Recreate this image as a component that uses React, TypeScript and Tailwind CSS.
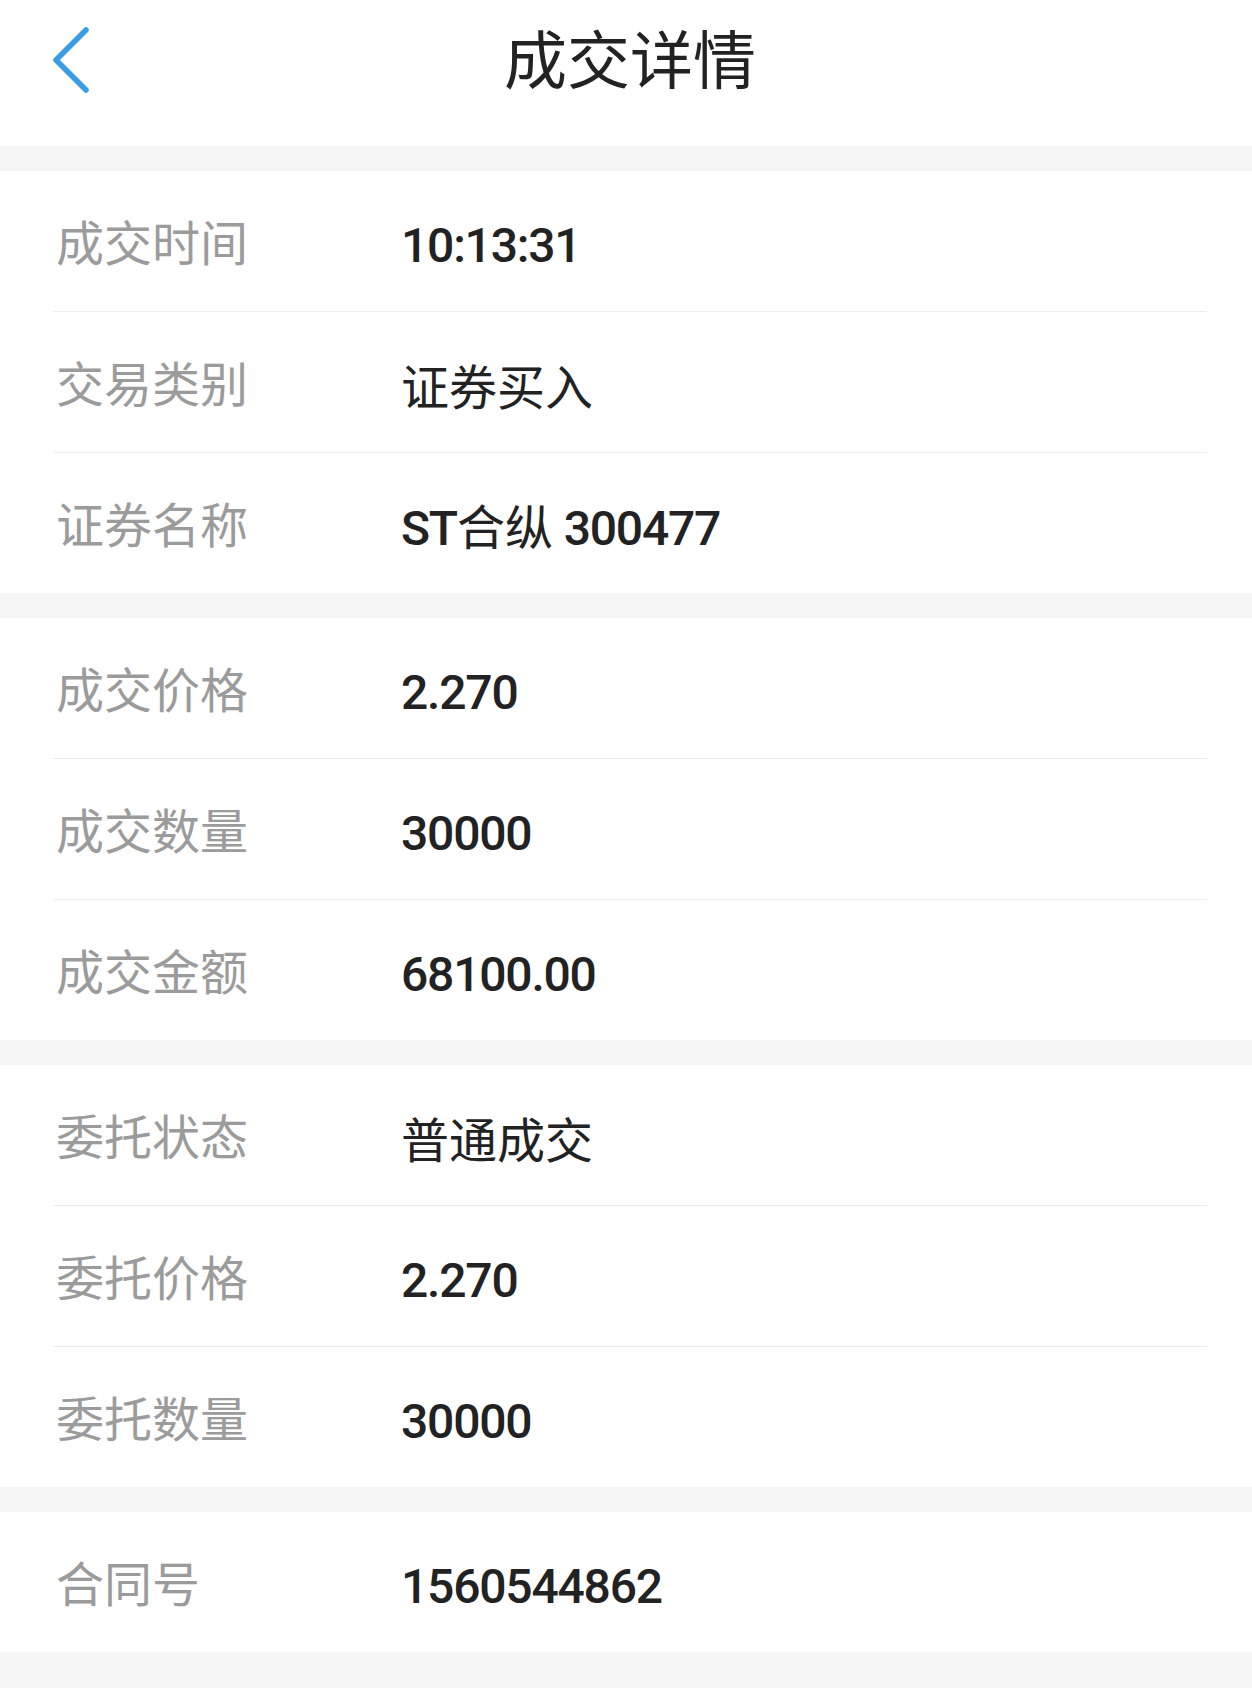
import React from "react";

type Row = { label: string; value: string };

const sections: Row[][] = [
  [
    { label: "成交时间", value: "10:13:31" },
    { label: "交易类别", value: "证券买入" },
    { label: "证券名称", value: "ST合纵 300477" },
  ],
  [
    { label: "成交价格", value: "2.270" },
    { label: "成交数量", value: "30000" },
    { label: "成交金额", value: "68100.00" },
  ],
  [
    { label: "委托状态", value: "普通成交" },
    { label: "委托价格", value: "2.270" },
    { label: "委托数量", value: "30000" },
  ],
  [{ label: "合同号", value: "1560544862" }],
];

function Value({ text }: { text: string }) {
  const runs = text.match(/[\u4e00-\u9fff]+|[^\u4e00-\u9fff]+/g) || [];
  return (
    <>
      {runs.map((r, i) =>
        /[\u4e00-\u9fff]/.test(r) ? (
          <span key={i} className="font-normal [font-family:'Noto_Sans_CJK_SC',sans-serif]">
            {r}
          </span>
        ) : (
          <span key={i} className="font-medium tracking-[-1.2px] [font-family:Roboto,sans-serif]">
            {r}
          </span>
        )
      )}
    </>
  );
}

function DetailRow({ row, last }: { row: Row; last: boolean }) {
  return (
    <div
      className={
        "ml-[53px] mr-[45px] flex items-center border-b " +
        (last ? "h-[140px] border-transparent border-b-0" : "h-[141px] border-[#ececec]")
      }
    >
      <div className="w-[348px] pl-[3px] pb-[2px] text-[48px] leading-none text-[#9b9b9b] [font-family:'Noto_Sans_CJK_SC',sans-serif]">
        {row.label}
      </div>
      <div className="pt-[7px] text-[48px] leading-none text-[#222222] whitespace-pre">
        <Value text={row.value} />
      </div>
    </div>
  );
}

export default function App() {
  return (
    <div className="w-[1252px] min-h-[1688px] bg-[#f5f5f5] pb-[36px]">
      <header className="h-[146px] bg-white pb-[26px] grid grid-cols-[1fr_auto_1fr] items-center">
        <div className="pl-[52px] flex items-center">
          <svg width="40" height="66" viewBox="0 0 40 66" fill="none">
            <path
              d="M34 3 L4 33 L34 63"
              stroke="#3a9ce3"
              strokeWidth="5.5"
              strokeLinecap="round"
              strokeLinejoin="round"
            />
          </svg>
        </div>
        <h1 className="pb-[10px] pl-[8px] text-[63px] leading-none text-[#222222] [font-family:'Noto_Sans_CJK_SC',sans-serif]">
          成交详情
        </h1>
        <div />
      </header>
      {sections.map((rows, i) => (
        <section key={i} className="bg-white mt-[25px]">
          {rows.map((r, j) => (
            <DetailRow key={j} row={r} last={j === rows.length - 1} />
          ))}
        </section>
      ))}
    </div>
  );
}
